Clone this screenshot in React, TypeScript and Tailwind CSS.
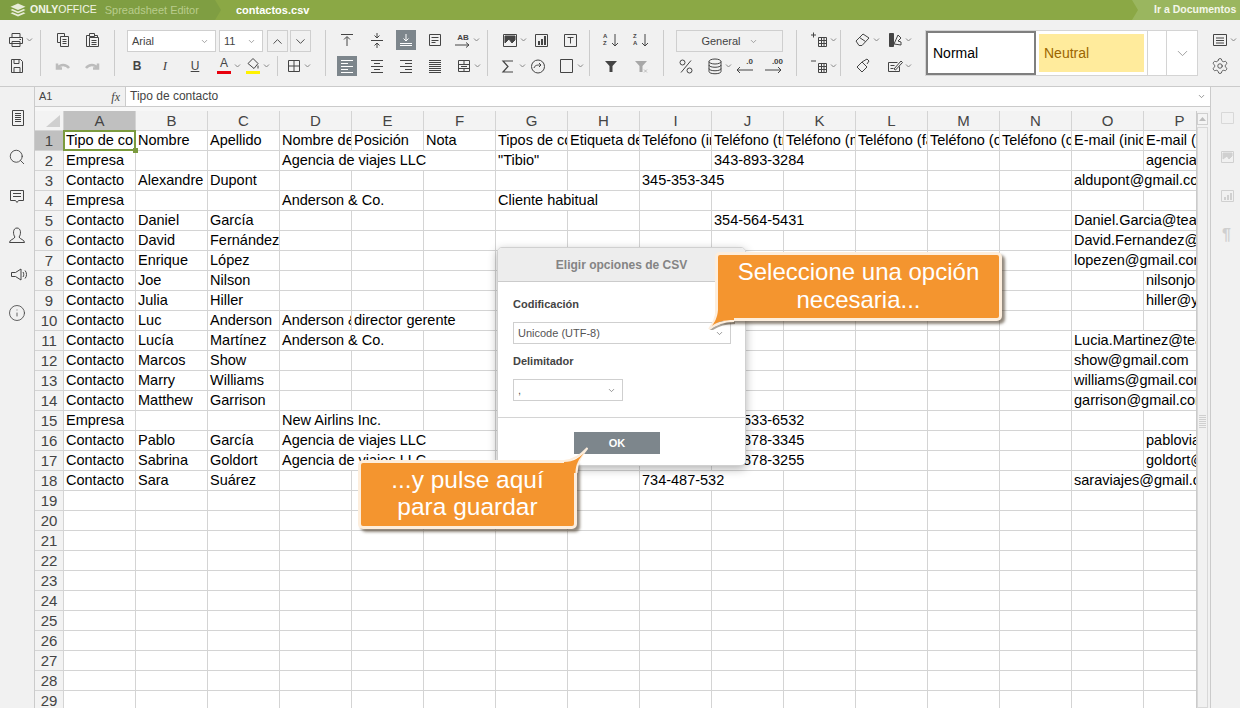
import type {ReactNode} from "react";
import {ChevronDown, ChevronUp, Search, Settings, Info} from "lucide-react";

const columns = ["A", "B", "C", "D", "E", "F", "G", "H", "I", "J", "K", "L", "M", "N", "O", "P"];

// [column index, text, span]
type Cell = [number, string, number?];

const heading: Cell[] = [
  [0, "Tipo de contacto"], [1, "Nombre"], [2, "Apellido"], [3, "Nombre de la empresa"], [4, "Posición"], [5, "Nota"],
  [6, "Tipos de contacto"], [7, "Etiqueta de contacto"], [8, "Teléfono (inicio)"], [9, "Teléfono (trabajo)"], [10, "Teléfono (móvil)"],
  [11, "Teléfono (fax)"], [12, "Teléfono (otro)"], [13, "Teléfono (casa)"], [14, "E-mail (inicio)"], [15, "E-mail (trabajo)"],
];

const rows: Cell[][] = [
  heading,
  [[0, "Empresa"], [3, "Agencia de viajes LLC", 3], [6, "\"Tibio\""], [9, "343-893-3284", 2], [15, "agenciaviajes@gmail.com"]],
  [[0, "Contacto"], [1, "Alexandre"], [2, "Dupont"], [8, "345-353-345", 2], [14, "aldupont@gmail.com", 2]],
  [[0, "Empresa"], [3, "Anderson & Co.", 2], [6, "Cliente habitual", 2]],
  [[0, "Contacto"], [1, "Daniel"], [2, "García"], [9, "354-564-5431", 2], [14, "Daniel.Garcia@team.com", 2]],
  [[0, "Contacto"], [1, "David"], [2, "Fernández"], [14, "David.Fernandez@team.com", 2]],
  [[0, "Contacto"], [1, "Enrique"], [2, "López"], [14, "lopezen@gmail.com", 2]],
  [[0, "Contacto"], [1, "Joe"], [2, "Nilson"], [15, "nilsonjoe@gmail.com"]],
  [[0, "Contacto"], [1, "Julia"], [2, "Hiller"], [15, "hiller@yahoo.com"]],
  [[0, "Contacto"], [1, "Luc"], [2, "Anderson"], [3, "Anderson & Co."], [4, "director gerente", 2]],
  [[0, "Contacto"], [1, "Lucía"], [2, "Martínez"], [3, "Anderson & Co.", 2], [14, "Lucia.Martinez@team.com", 2]],
  [[0, "Contacto"], [1, "Marcos"], [2, "Show"], [14, "show@gmail.com", 2]],
  [[0, "Contacto"], [1, "Marry"], [2, "Williams"], [14, "williams@gmail.com", 2]],
  [[0, "Contacto"], [1, "Matthew"], [2, "Garrison"], [14, "garrison@gmail.com", 2]],
  [[0, "Empresa"], [3, "New Airlins Inc.", 2], [9, "343-533-6532", 2]],
  [[0, "Contacto"], [1, "Pablo"], [2, "García"], [3, "Agencia de viajes LLC", 3], [9, "343-878-3345", 2], [15, "pabloviajes@gmail.com"]],
  [[0, "Contacto"], [1, "Sabrina"], [2, "Goldort"], [3, "Agencia de viajes LLC", 3], [9, "343-878-3255", 2], [15, "goldort@gmail.com"]],
  [[0, "Contacto"], [1, "Sara"], [2, "Suárez"], [8, "734-487-532", 2], [14, "saraviajes@gmail.com", 2]],
];

function Ico({children, className = "text-[#444]"}: {children: ReactNode; className?: string}) {
  return (
    <svg viewBox="0 0 20 20" width={20} height={20} fill="none" stroke="currentColor" className={`shrink-0 ${className}`}>
      {children}
    </svg>
  );
}

function Caret() {
  return (
    <svg viewBox="0 0 7 20" width={7} height={20} fill="none" stroke="#888" className="shrink-0">
      <path d="M1 8.500l2.500 2.500L6 8.500" />
    </svg>
  );
}

function Row({children, className = ""}: {children: ReactNode; className?: string}) {
  return <div className={`flex h-5 items-start ${className}`}>{children}</div>;
}

function Group({children, className}: {children: ReactNode; className: string}) {
  return <div className={`flex h-[46px] shrink-0 flex-col gap-[6px] ${className}`}>{children}</div>;
}

function Select({label, className}: {label: string; className: string}) {
  return (
    <div className={`flex h-[22px] items-center justify-between border border-[#cfcfcf] bg-white pl-1 pr-[6px] text-[11px] text-[#444] ${className}`}>
      {label}
      <ChevronDown size={9} className="text-[#888]" />
    </div>
  );
}

const lines = (ys: number[], x1: number, x2: number) => ys.map((y) => `M${x1} ${y + 0.5}H${x2}`).join("");

function Toolbar() {
  return (
    <div className="flex h-[67px] shrink-0 border-b border-[#cbcbcb] bg-[#f1f1f1] pt-[10px] text-[#444]">
      <Group className="w-[41px] border-r border-[#cbcbcb]">
        <Row className="pl-[6px]">
          <Ico><path d="M6 7V3.500h8V7M3.500 7.500h13v6h-13zM6 11.500h8v5H6zM13.500 9.500h1.500" /></Ico>
          <Caret />
        </Row>
        <Row className="pl-[7px]">
          <Ico><path d="M4.500 3.500h9l2 2v11h-11zM7 3.500v4h5v-4M7 16.500v-5h6v5" /></Ico>
        </Row>
      </Group>

      <Group className="w-[74px] border-r border-[#cbcbcb]">
        <Row className="gap-[9px] pl-3">
          <Ico><path d="M4.500 3.500h7v3M4.500 3.500v9h3M7.500 6.500h8v10h-8zM9.500 9.500h4M9.500 11.500h4M9.500 13.500h4" /></Ico>
          <Ico><path d="M7.500 5.500h-3v11h3M7.500 3.500h5v3h-5zM12.500 5.500h3v2M7.500 7.500h9v9h-9zM9.500 10.500h5M9.500 12.500h5M9.500 14.500h5" /></Ico>
        </Row>
        <Row className="gap-[9px] pl-3">
          <Ico className="text-[#bcbcbc]"><path strokeWidth="2.500" d="M5 12c2-4 8-4 11 0M4 7.500v5h5" /></Ico>
          <Ico className="text-[#bcbcbc]"><path strokeWidth="2.500" d="M15 12c-2-4-8-4-11 0M16 7.500v5h-5" /></Ico>
        </Row>
      </Group>

      <Group className="w-[211px] border-r border-[#cbcbcb]">
        <Row className="pl-3">
          <Select label="Arial" className="w-[89px]" />
          <Select label="11" className="ml-[3px] w-11" />
          <div className="ml-1 flex h-[22px] w-[21px] items-center justify-center border border-[#cfcfcf]"><ChevronUp size={15} strokeWidth={1.5} /></div>
          <div className="ml-[2px] flex h-[22px] w-[21px] items-center justify-center border border-[#cfcfcf]"><ChevronDown size={15} strokeWidth={1.5} /></div>
        </Row>
        <Row className="pl-3">
          <span className="w-5 text-center text-[12px] leading-5 font-bold">B</span>
          <span className="ml-2 w-5 text-center font-['Liberation_Serif'] text-[13px] leading-5 italic">I</span>
          <span className="ml-[10px] w-5 text-center text-[12px] leading-5 underline">U</span>
          <span className="ml-[9px] flex w-5 flex-col items-center text-[12px] leading-[15px]">A<span className="h-[3px] w-[14px] bg-[#e8000d]" /></span>
          <Caret />
          <span className="ml-[2px] flex w-5 flex-col items-center">
            <svg viewBox="0 0 14 14" width={14} height={15} fill="none" stroke="#444"><path d="M2 7l5-5 5 5-4 5zM12 9v3" /></svg>
            <span className="h-[3px] w-[14px] bg-[#fff200]" />
          </span>
          <Caret />
          <span className="ml-[7px] h-[20px] w-px bg-[#cbcbcb]" />
          <span className="ml-[6px] flex">
            <Ico><path d="M4.500 4.500h11v11h-11zM10 4.500v11M4.500 10h11" /></Ico>
            <Caret />
          </span>
        </Row>
      </Group>

      <Group className="w-[162px] border-r border-[#cbcbcb]">
        <Row className="pl-[11px]">
          <Ico><path d="M4 4.500h12M10 16V7M7 9.500l3-3 3 3" /></Ico>
          <span className="ml-[10px] flex">
            <Ico><path d="M4 10.500h12M10 3v5M7.500 5.500l2.500 2.500 2.500-2.500M10 18v-5M7.500 15.500l2.500-2.500 2.500 2.500" /></Ico>
          </span>
          <span className="ml-[9px] flex bg-[#7d868c]">
            <Ico className="text-white"><path d="M4 13.500h12M4 15.500h12M10 4v7M7.500 8.500l2.500 2.500 2.500-2.500" /></Ico>
          </span>
          <span className="ml-[9px] flex">
            <Ico><path d="M4.500 4.500h11v11h-11zM6.500 7.500h7M6.500 10.500h7M6.500 12.500h4" /></Ico>
          </span>
          <span className="ml-2 flex w-5 flex-col items-center pt-[3px] text-[8px] leading-[9px] font-bold">
            AB
            <svg viewBox="0 0 16 6" width={16} height={6} fill="none" stroke="#444"><path d="M0 3h14M11 .5l3 2.500-3 2.500" /></svg>
          </span>
          <Caret />
        </Row>
        <Row className="pl-[11px]">
          <span className="flex bg-[#7d868c]">
            <Ico className="text-white"><path d="M4 4.500h12M4 7.500h7M4 10.500h12M4 13.500h7M4 16.500h12" /></Ico>
          </span>
          <span className="ml-[10px] flex">
            <Ico><path d="M4 4.500h12M7 7.500h6M4 10.500h12M7 13.500h6M4 16.500h12" /></Ico>
          </span>
          <span className="ml-[9px] flex">
            <Ico><path d="M4 4.500h12M9 7.500h7M4 10.500h12M9 13.500h7M4 16.500h12" /></Ico>
          </span>
          <span className="ml-[9px] flex">
            <Ico><path d={lines([4, 6, 8, 10, 12, 14, 16], 4, 16)} /></Ico>
          </span>
          <span className="ml-[9px] flex">
            <Ico><path d="M4.500 4.500h11v11h-11zM4.500 8.500h11M4.500 12.500h11M10 4.500v4M10 12.500v3M7 10.500h6" /></Ico>
          </span>
          <Caret />
        </Row>
      </Group>

      <Group className="w-[102px] border-r border-[#cbcbcb]">
        <Row className="pl-3">
          <Ico><path d="M3.500 4.500h13v12h-13z" /><path fill="currentColor" d="M5 6h10v4l-3 3-3-4-4 4z" /></Ico>
          <Caret />
          <span className="ml-1 flex">
            <Ico><path d="M4.500 4.500h12v12h-12z" /><path fill="currentColor" stroke="none" d="M7 11h2v4H7zM10 9h2v6h-2zM13 6h2v9h-2z" /></Ico>
          </span>
          <span className="ml-[9px] flex">
            <Ico><path d="M4.500 4.500h12v12h-12zM7.500 7.500h6M10.500 7.500v6" /></Ico>
          </span>
        </Row>
        <Row className="pl-[10px]">
          <Ico><path strokeWidth="1.200" d="M15 5H5l5 5.500L5 16h10" /></Ico>
          <span className="ml-px flex"><Caret /></span>
          <span className="ml-[2px] flex">
            <Ico><circle cx="10" cy="10.500" r="6.500" /><path d="M6 12c1-3 3-3 7-3M11 7l2 2-2 2" /></Ico>
          </span>
          <span className="ml-[9px] flex">
            <Ico><path d="M3.500 3.500h12v13h-12z" /></Ico>
          </span>
          <Caret />
        </Row>
      </Group>

      <Group className="w-[74px] border-r border-[#cbcbcb]">
        <Row className="gap-[10px] pl-[11px] text-[6px] leading-[7px] font-bold">
          <span className="flex w-5 items-center justify-center gap-[2px] pt-[3px]">
            <span className="w-[6px]">A<br />Z</span>
            <svg viewBox="0 0 8 14" width={8} height={14} fill="none" stroke="#444"><path d="M4 1v12M1 10l3 3 3-3" /></svg>
          </span>
          <span className="flex w-5 items-center justify-center gap-[2px] pt-[3px]">
            <span className="w-[6px]">Z<br />A</span>
            <svg viewBox="0 0 8 14" width={8} height={14} fill="none" stroke="#444"><path d="M4 1v12M1 10l3 3 3-3" /></svg>
          </span>
        </Row>
        <Row className="gap-[10px] pl-[11px]">
          <Ico><path fill="currentColor" stroke="none" d="M4 5h12l-4.500 5v6h-3v-6z" /></Ico>
          <Ico className="text-[#a8a8a8]"><path fill="currentColor" stroke="none" d="M4 5h12l-4.500 5v6h-3v-6z" /><path strokeWidth="0.700" d="M13 13.500l3 3M16 13.500l-3 3" /></Ico>
        </Row>
      </Group>

      <Group className="w-[133px] border-r border-[#cbcbcb]">
        <Row className="pl-3">
          <div className="flex h-[22px] w-[107px] items-center justify-center gap-2 border border-[#cfcfcf] text-[11px]">
            General
            <ChevronDown size={9} className="text-[#888]" />
          </div>
        </Row>
        <Row className="pl-3">
          <Ico><circle cx="6.500" cy="6.500" r="2.500" /><circle cx="13.500" cy="14.500" r="2.500" /><path d="M15 4.500L5 16.500" /></Ico>
          <span className="ml-[9px] flex">
            <Ico><ellipse cx="10" cy="5.500" rx="6" ry="2.500" /><path d="M4 5.500v10c0 3 12 3 12 0v-10M4 9c0 3 12 3 12 0M4 12.500c0 3 12 3 12 0" /></Ico>
          </span>
          <Caret />
          <span className="ml-px flex w-5 flex-col items-end pt-[2px] text-[8px] leading-[8px] font-bold">
            .0
            <svg viewBox="0 0 18 8" width={18} height={8} fill="none" stroke="#444"><path d="M18 4H2M5 1L2 4l3 3" /></svg>
          </span>
          <span className="ml-[10px] flex w-5 flex-col items-end pt-[2px] text-[8px] leading-[8px] font-bold">
            .00
            <svg viewBox="0 0 18 8" width={18} height={8} fill="none" stroke="#444"><path d="M0 4h16M13 1l3 3-3 3" /></svg>
          </span>
        </Row>
      </Group>

      <Group className="w-11 border-r border-[#cbcbcb]">
        <Row className="pl-[13px]">
          <Ico><path d="M1 5h5M3.500 2.500v5M8.500 7.500h8v9h-8zM8.500 10.500h8M8.500 13.500h8M11.500 7.500v9M14 7.500v9" /></Ico>
          <Caret />
        </Row>
        <Row className="pl-[13px]">
          <Ico><path d="M1 5h5M8.500 7.500h8v9h-8zM8.500 10.500h8M8.500 13.500h8M11.500 7.500v9M14 7.500v9" /></Ico>
          <Caret />
        </Row>
      </Group>

      <Group className="w-[84px]">
        <Row className="pl-3">
          <Ico><path d="M3 11l7-7 6 4-7 7.500h-3zM6.500 7.500l6 4" /></Ico>
          <Caret />
          <span className="ml-[5px] flex">
            <Ico><path fill="currentColor" d="M4.500 3.500h4v13h-4z" /><path d="M9 14l4-9 3 3-3 3 3 1v3z" /></Ico>
          </span>
          <Caret />
        </Row>
        <Row className="pl-3">
          <Ico><path d="M4 11l5-5 5 5-5 5zM9 6l5-3M14 3l2 2-2 3" /></Ico>
          <span className="ml-3 flex">
            <Ico><path d="M3.500 6.500h9M3.500 6.500v9h11v-5M5.500 9.500h4M5.500 12.500h3M9 13l7-8 1.500 1.500-7 7.500z" /></Ico>
          </span>
          <Caret />
        </Row>
      </Group>

      <div className="flex h-[46px] w-[273px] shrink-0 border border-[#d4d4d4] bg-white text-[14px]">
        <div className="flex w-[110px] items-center border-2 border-[#7f7f7f] pl-[5px] text-black">Normal</div>
        <div className="w-[111px] p-[3px]">
          <div className="flex h-full items-center bg-[#ffeb9c] pl-[5px] text-[#9c6500]">Neutral</div>
        </div>
        <div className="w-5 border-x border-[#d4d4d4]" />
        <div className="flex flex-1 items-center justify-center">
          <ChevronDown size={17} strokeWidth={1.3} className="text-[#999]" />
        </div>
      </div>

      <Group className="w-[42px] pl-3">
        <Row>
          <Ico><path d="M3.500 4.500h13v11h-13zM6 8h8M6 10.500h8M6 13h8" /></Ico>
          <Caret />
        </Row>
        <Row>
          <Settings size={18} strokeWidth={1.1} className="mt-px ml-px" />
        </Row>
      </Group>
    </div>
  );
}

function Grid() {
  return (
    <div className="min-w-0 flex-1 overflow-hidden bg-white">
      <table className="w-[1181px] table-fixed border-separate border-spacing-0 font-['Liberation_Sans'] text-[14.500px] leading-[19px] text-black">
        <colgroup>
          <col className="w-[29px]" />
          {columns.map((c) => <col key={c} className="w-[72px]" />)}
        </colgroup>
        <thead>
          <tr>
            <th className="h-5 border-r border-b border-[#d4d4d4] bg-[#f3f3f3] p-0">
              <svg viewBox="0 0 28 19" width={28} height={19}><path d="M25 4v12H11z" fill="#cfcfcf" /></svg>
            </th>
            {columns.map((c, i) => (
              <th
                key={c}
                className={`h-5 border-r border-b border-[#d4d4d4] p-0 text-center text-[15px] font-normal text-[#444] ${i === 0 ? "bg-[#c0c0c0]" : "bg-[#f3f3f3]"}`}
              >
                {c}
              </th>
            ))}
          </tr>
        </thead>
        <tbody>
          {Array.from({length: 29}, (_, r) => {
            const filled = rows[r] ?? [];
            const cells: ReactNode[] = [];
            for (let c = 0; c < columns.length; c++) {
              const cell = filled.find((f) => f[0] === c);
              const span = cell?.[2] ?? 1;
              cells.push(
                <td
                  key={c}
                  colSpan={span}
                  className="relative h-5 overflow-hidden border-r border-b border-[#d4d4d4] px-[2px] py-0 whitespace-nowrap"
                >
                  {cell?.[1]}
                </td>,
              );
              c += span - 1;
            }
            return (
              <tr key={r}>
                <td className={`h-5 border-r border-b border-[#d4d4d4] p-0 text-center text-[15px] text-[#444] ${r === 0 ? "bg-[#c0c0c0]" : "bg-[#f3f3f3]"}`}>
                  {r + 1}
                </td>
                {cells}
              </tr>
            );
          })}
        </tbody>
      </table>
    </div>
  );
}

function Callout({children, className, fill, rim, shade, tailClass}: {children: ReactNode; className: string; fill: string; rim: string; shade?: string; tailClass: string}) {
  return (
    <div className={`absolute flex flex-col items-center justify-center rounded-[5px] border-[3px] border-[#fdeedd] bg-[#f4952f] text-center text-white shadow-[3px_3px_3px_rgba(70,55,35,0.6)] ${className}`}>
      <svg viewBox="0 0 32 32" width={32} height={32} fill="none" className={`absolute ${tailClass}`}>
        {shade && <path d={shade} stroke="rgba(70,55,35,0.45)" strokeWidth="2" transform="translate(1 2)" />}
        <path d={rim} stroke="#fdeedd" strokeWidth="2" />
        <path d={fill} fill="#f4952f" />
      </svg>
      {children}
    </div>
  );
}

function Dialog() {
  return (
    <div className="absolute top-[247px] left-[497px] flex h-[219px] w-[249px] flex-col overflow-hidden rounded-[5px] border border-[#d0d0d0] bg-white text-[11px] leading-4 text-[#444] shadow-[0_3px_10px_rgba(0,0,0,0.3)]">
      <div className="flex h-[34px] shrink-0 items-center justify-center border-b border-[#cbcbcb] bg-[#ededed] text-[12px] font-bold text-[#848484]">
        Eligir opciones de CSV
      </div>
      <div className="px-[15px] pt-[14px]">
        <div className="font-bold">Codificación</div>
        <div className="mt-[10px] flex h-[22px] w-[218px] items-center justify-between border border-[#cfcfcf] pr-[6px] pl-1 text-[#555]">
          Unicode (UTF-8)
          <ChevronDown size={9} className="text-[#777]" />
        </div>
        <div className="mt-[9px] font-bold">Delimitador</div>
        <div className="mt-[10px] flex h-[22px] w-[110px] items-center justify-between border border-[#cfcfcf] pr-[6px] pl-1 text-[#555]">
          ,
          <ChevronDown size={9} className="text-[#777]" />
        </div>
      </div>
      <div className="mt-4 flex flex-1 justify-center border-t border-[#d4d4d4] pt-[14px] pr-[9px]">
        <div className="flex h-[22px] w-[86px] items-center justify-center bg-[#7d868c] font-bold text-white">OK</div>
      </div>
    </div>
  );
}

export default function App() {
  return (
    <div className="relative flex h-[708px] w-[1240px] flex-col overflow-hidden bg-[#f1f1f1] font-['Liberation_Sans',sans-serif]">
      <header className="flex h-5 shrink-0 items-center bg-[#8ba845] text-[11px] font-bold text-white">
        <div className="flex h-full w-[215px] items-center bg-[#7f9e42] pl-[10px]">
          <svg viewBox="0 0 16 14" width={16} height={14} fill="#e8ecd8">
            <path d="M8 .5l7.500 3.300L8 7.100.5 3.800z" />
            <path d="M2.500 6L.5 7l7.500 3.300L15.500 7l-2-1L8 8.400z" />
            <path d="M2.500 9.200l-2 1L8 13.500l7.500-3.300-2-1L8 11.600z" />
          </svg>
          <span className="ml-1 text-[10.500px] text-[#f2f5e6]">ONLY<span className="font-normal">OFFICE</span></span>
          <span className="ml-2 font-normal text-[#b9cc8c]">Spreadsheet Editor</span>
        </div>
        <svg viewBox="0 0 6 20" width={6} height={20} fill="#7f9e42"><path d="M0 0l6 10-6 10z" /></svg>
        <span className="ml-[15px] flex-1">contactos.csv</span>
        <div className="flex h-full w-[108px] items-center bg-[#9ab65f] text-[10.500px] text-[#f4f7ea]">
          <svg viewBox="0 0 6 20" width={6} height={20} fill="#8ba845"><path d="M0 0l6 10-6 10z" /></svg>
          <span className="ml-4">Ir a Documentos</span>
        </div>
      </header>

      <Toolbar />

      <div className="flex min-h-0 flex-1">
        <aside className="flex w-[35px] shrink-0 flex-col border-r border-[#cbcbcb] pt-[11px] text-[#444]">
          <div className="flex h-[39px] items-center justify-center pl-[2px]">
            <Ico><path d="M4.500 2.500h11v15h-11zM7 5.500h6M7 7.500h6M7 9.500h6M7 11.500h6M7 13.500h6" /></Ico>
          </div>
          <div className="flex h-[39px] items-center justify-center"><Search size={18} strokeWidth={1.2} /></div>
          <div className="flex h-[39px] items-center justify-center">
            <Ico><path d="M3.500 4.500h13v10h-5l-1.500 2-1.500-2h-5zM6 7.500h8M6 10.500h8" /></Ico>
          </div>
          <div className="flex h-[39px] items-center justify-center">
            <Ico><path d="M2.500 17.500c0-3 4.500-3 5.500-5.500-2-2-2.500-9 2-9s4 7 2 9c1 2.500 5.500 2.500 5.500 5.500z" /></Ico>
          </div>
          <div className="flex h-[39px] items-center justify-center pl-[3px]">
            <Ico><path d="M2.500 8.500h4L12 5v11l-5.500-3.500h-4zM14 8c1 1.500 1 3.500 0 5M16 6.500c2 2 2 6 0 8" /></Ico>
          </div>
          <div className="flex h-[39px] items-center justify-center"><Info size={18} strokeWidth={1.1} /></div>
        </aside>

        <main className="flex w-[1176px] shrink-0 flex-col border-r border-[#cbcbcb]">
          <div className="flex h-5 shrink-0 items-center border-b border-[#cbcbcb] bg-white text-[#444]">
            <div className="flex h-full w-[91px] items-center justify-between border-r border-[#cbcbcb] bg-[#f1f1f1] pr-[5px] pl-1 text-[11px]">
              A1
              <span className="font-['Liberation_Serif'] text-[12px] italic">fx</span>
            </div>
            <span className="ml-1 flex-1 pb-[2px] text-[12px]">Tipo de contacto</span>
            <ChevronDown size={9} className="mr-[4px] text-[#777]" />
          </div>
          <div className="h-1 shrink-0 bg-[#f7f7f7]" />
          <div className="flex min-h-0 flex-1">
            <Grid />
            <div className="flex w-[14px] shrink-0 flex-col border-l border-[#cbcbcb] bg-[#f1f1f1] pr-[2px]">
              <div className="mt-[2px] flex h-[12px] items-center justify-center border border-[#cfcfcf] bg-[#f4f4f4]">
                <svg viewBox="0 0 7 4" width={7} height={4} fill="#bdbdbd"><path d="M3.500 0L7 4H0z" /></svg>
              </div>
              <div className="mt-[2px] flex flex-1 flex-col items-center gap-px border border-[#d8d8d8] pt-[287px]">
                {Array.from({length: 7}, (_, i) => <span key={i} className="h-px w-[7px] bg-[#cfcfcf]" />)}
              </div>
            </div>
          </div>
        </main>

        <aside className="flex flex-1 flex-col items-center pt-[11px] pl-[2px] text-[#cfcfcf]">
          <div className="flex h-[39px] items-center justify-center">
            <Ico className="text-[#d8d8d8]"><path d="M4.500 4.500h12v11h-12z" /></Ico>
          </div>
          <div className="flex h-[39px] items-center justify-center">
            <Ico className="text-[#d0d0d0]"><path d="M4.500 4.500h12v11h-12z" /><path fill="currentColor" d="M6 6h9v3l-3 3-2-3-4 3z" /></Ico>
          </div>
          <div className="flex h-[39px] items-center justify-center">
            <Ico className="text-[#d0d0d0]"><path d="M4.500 4.500h12v11h-12z" /><path fill="currentColor" stroke="none" d="M7 11h2v3H7zM10 9h2v5h-2zM13 7h2v7h-2z" /></Ico>
          </div>
          <div className="flex h-[39px] items-center justify-center text-[16px] font-bold">¶</div>
        </aside>
      </div>

      {/* selected cell A1 */}
      <div className="absolute top-[130px] left-[63px] h-[21px] w-[73px] border-2 border-[#7b9a3e]">
        <span className="absolute -right-[4px] -bottom-[4px] h-[5px] w-[5px] bg-[#7b9a3e]" />
      </div>

      <Dialog />

      <Callout
        className="top-[252px] left-[715px] h-[69px] w-[287px] pb-[2px] text-[24px] leading-[28px]"
        rim="M8.500 12C8 20 5 26 1 31 8 25 15 23 26 23"
        fill="M10 12C9.500 20 6 25 4 28 9 24 15 22 26 22V12z"
        shade="M1 31C8 25 15 23 26 23"
        tailClass="-bottom-[12px] -left-[10px]"
      >
        <span>Seleccione una opción</span>
        <span>necesaria...</span>
      </Callout>
      <Callout
        className="top-[460px] left-[358px] h-[69px] w-[219px] pb-[4px] text-[24.500px] leading-[27px]"
        rim="M8 14C18 13.500 25 8 31.500 1 26 8 21 14 20.500 26"
        fill="M8 15C18 15 24 10 28 6 23 12 19.500 17 19.500 26H8z"
        tailClass="-top-[16px] -right-[14px]"
      >
        <span>...y pulse aquí</span>
        <span>para guardar</span>
      </Callout>
    </div>
  );
}
